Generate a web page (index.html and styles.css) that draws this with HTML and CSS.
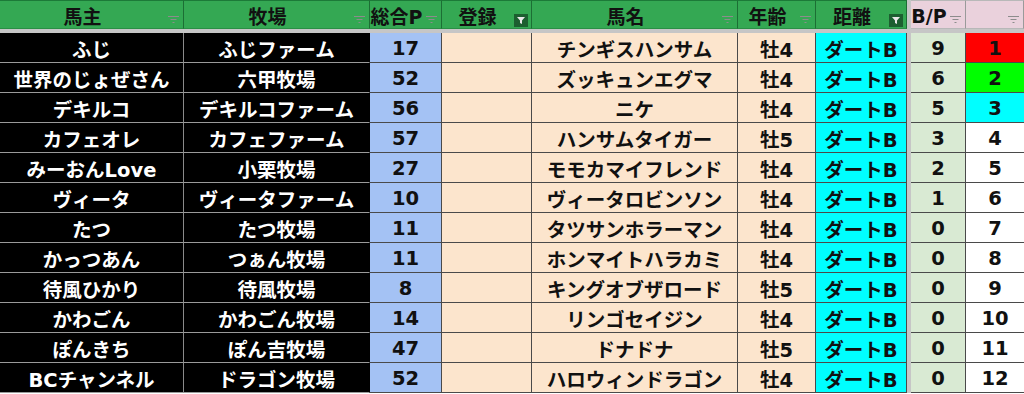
FILE: index.html
```html
<!DOCTYPE html>
<html lang="ja">
<head>
  <meta charset="UTF-8" />
  <title>ダート戦 登録一覧</title>
  <link rel="stylesheet" href="styles.css">
</head>
<body>

<div class="sheet" id="sheet">
  <div class="freeze-row"></div>
  <div class="freeze-col"></div>

  <div class="h">馬主<span class="flt"></span></div>
  <div class="h">牧場<span class="flt"></span></div>
  <div class="h">総合P<span class="flt"></span></div>
  <div class="h">登録<span class="flt on"></span></div>
  <div class="h">馬名<span class="flt"></span></div>
  <div class="h">年齢<span class="flt"></span></div>
  <div class="h">距離<span class="flt on"></span></div>
  <div class="h pink">B/P<span class="flt"></span></div>
  <div class="h pink"><span class="flt"></span></div>
</div>

<script>
  const sheet = document.getElementById('sheet');

  const rows = [
    ['ふじ', 'ふじファーム', 17, 'チンギスハンサム', '牡4', 9],
    ['世界のじょぜさん', '六甲牧場', 52, 'ズッキュンエグマ', '牡4', 6],
    ['デキルコ', 'デキルコファーム', 56, 'ニケ', '牡4', 5],
    ['カフェオレ', 'カフェファーム', 57, 'ハンサムタイガー', '牡5', 3],
    ['みーおんLove', '小栗牧場', 27, 'モモカマイフレンド', '牡4', 2],
    ['ヴィータ', 'ヴィータファーム', 10, 'ヴィータロビンソン', '牡4', 1],
    ['たつ', 'たつ牧場', 11, 'タツサンホラーマン', '牡4', 0],
    ['かっつあん', 'つぁん牧場', 11, 'ホンマイトハラカミ', '牡4', 0],
    ['待風ひかり', '待風牧場', 8, 'キングオブザロード', '牡5', 0],
    ['かわごん', 'かわごん牧場', 14, 'リンゴセイジン', '牡4', 0],
    ['ぽんきち', 'ぽん吉牧場', 47, 'ドナドナ', '牡5', 0],
    ['BCチャンネル', 'ドラゴン牧場', 52, 'ハロウィンドラゴン', '牡4', 0]
  ];

  // top three get a coloured rank cell
  const rankClass = ['r1', 'r2', 'r3'];

  const filterIcon = `<svg width="11" height="8" viewBox="0 0 11 8"><path d="M0 0.5h11M2.5 3.5h6M4.5 6.5h2" stroke="#8c8c8c" stroke-width="1"/></svg>`;
  const activeIcon = `<svg width="14" height="13" viewBox="0 0 14 13"><rect width="14" height="13" fill="#1c5f30"/><path d="M3 3h8l-3 3.5v3.5l-2 -1v-2.5z" fill="#e8e8e8"/></svg>`;

  document.querySelectorAll('.flt').forEach(f => {
    f.innerHTML = f.classList.contains('on') ? activeIcon : filterIcon;
  });

  let html = '';
  rows.forEach((r, i) => {
    html += `
      <div class="c owner">${r[0]}</div>
      <div class="c owner">${r[1]}</div>
      <div class="c pts">${r[2]}</div>
      <div class="c peach"></div>
      <div class="c peach">${r[3]}</div>
      <div class="c peach">${r[4]}</div>
      <div class="c dist">ダートB</div>
      <div class="c bp">${r[5]}</div>
      <div class="c rank ${rankClass[i] || ''}">${i + 1}</div>
    `;
  });
  sheet.insertAdjacentHTML('beforeend', html);
</script>

</body>
</html>
```

FILE: styles.css
```css
body {
  margin: 0;
  padding: 0;
  background: #fff;
  /* latin + digits from DejaVu (wide, like the sheet font), kana/kanji from Noto CJK */
  font-family: "DejaVu Sans", "Noto Sans CJK JP", sans-serif;
  overflow: hidden;
}

.sheet {
  display: grid;
  grid-template-columns: 184px 186px 72px 90px 206px 78px 91px 4px 55px 58px;
  grid-template-rows: 29px 4px repeat(12, 30px);
  width: 1024px;
}

.freeze-row {
  grid-row: 2;
  grid-column: 1 / -1;
  background: #c6c6c6;
}

.freeze-col {
  grid-row: 1 / -1;
  grid-column: 8;
  background: #c6c6c6;
}

/* header */
.h {
  position: relative;
  box-sizing: border-box;
  display: flex;
  align-items: center;
  justify-content: center;
  padding: 2px 18px 0 0;
  background: #34a853;
  color: #111;
  font-size: 19px;
  font-weight: 700;
  white-space: nowrap;
  border-top: 1px solid #1c7a38;
  border-right: 1px solid #1c6e34;
  border-bottom: 1px solid #2a8f45;
}

.h.pink {
  background: #ead1dc;
  border-right-color: #9a9a9a;
  border-bottom-color: #b8b8b8;
  border-top-color: #b8b8b8;
}

.flt {
  position: absolute;
  right: 4px;
  bottom: 4px;
  line-height: 0;
}

.flt.on {
  right: 3px;
  bottom: 1px;
}

/* body cells */
.c {
  box-sizing: border-box;
  display: flex;
  align-items: center;
  justify-content: center;
  padding-top: 1px;
  font-size: 19.5px;
  font-weight: 700;
  color: #111;
  white-space: nowrap;
  border-right: 1px solid #4a4a4a;
  border-bottom: 1px solid #4a4a4a;
}

.owner {
  background: #000;
  color: #fff;
  border-right-color: #8a8a8a;
  border-bottom-color: #9a9a9a;
}

.owner + .owner {
  border-right-color: #000;
}

.pts {
  background: #a4c2f4;
}

.peach {
  background: #fce5cd;
}

.dist {
  background: #00ffff;
}

.bp {
  background: #d9ead3;
}

.rank {
  background: #fff;
  border-right: none;
}

.rank.r1 { background: #ff0000; }
.rank.r2 { background: #00ff00; }
.rank.r3 { background: #00ffff; }
```
